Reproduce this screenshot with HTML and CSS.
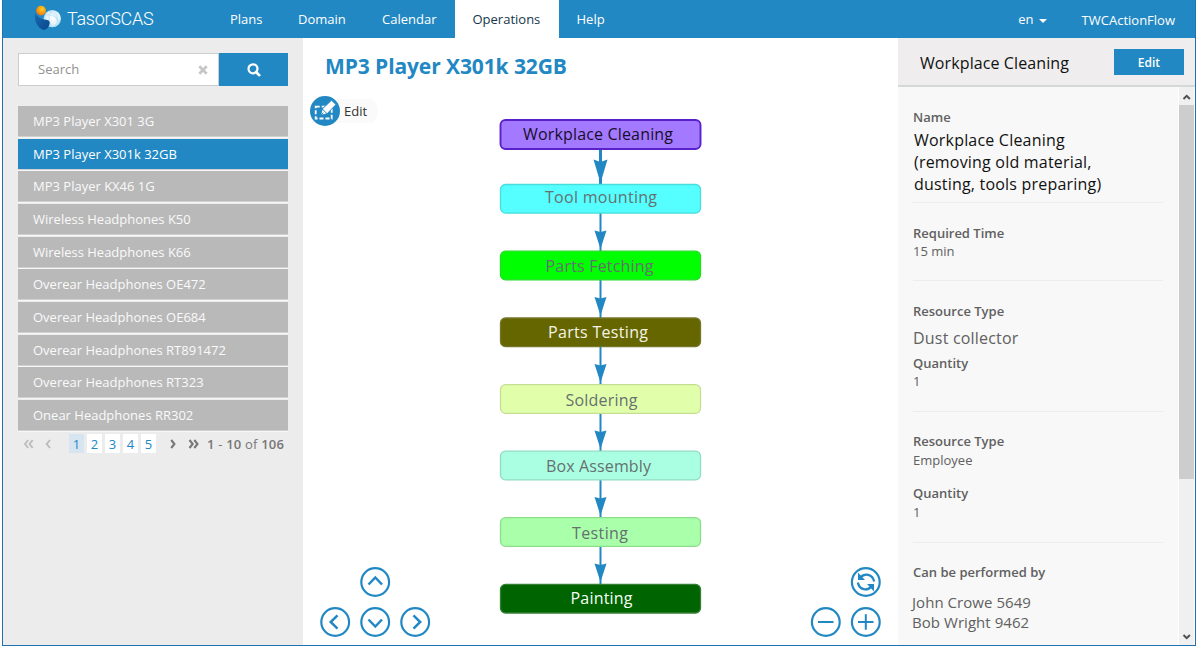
FILE: index.html
```html
<!DOCTYPE html>
<html lang="en">
<head>
<meta charset="utf-8">
<title>TasorSCAS - Operations</title>
<link rel="stylesheet" href="styles.css">
</head>
<body>
<div class="window">
  <header class="topbar">
    <div class="brand">
      <svg class="logo" width="28" height="28" viewBox="0 0 28 28">
        <defs>
          <radialGradient id="sun" cx="60%" cy="35%" r="65%"><stop offset="0" stop-color="#ffd21e"/><stop offset=".5" stop-color="#fba414"/><stop offset="1" stop-color="#ee7414"/></radialGradient>
          <radialGradient id="globe" cx="55%" cy="45%" r="60%"><stop offset="0" stop-color="#fff"/><stop offset=".6" stop-color="#e2f3fb"/><stop offset="1" stop-color="#a4daf4"/></radialGradient>
          <linearGradient id="body" x1="0" y1="0" x2="1" y2="1"><stop offset="0" stop-color="#1d69b0"/><stop offset="1" stop-color="#07478c"/></linearGradient>
        </defs>
        <circle cx="19.300" cy="14.600" r="8.700" fill="url(#globe)"/>
        <path d="M12 11Q20 9 27 18M15 7Q24 10 26 20M19 6Q28 12 22 23M20 6Q13 10 18 22" fill="none" stroke="#9bd3ee" stroke-width=".5"/>
        <path d="M2 9C4 12.500 8 15.500 13 15.800C16.500 16 17.500 18.500 16.300 21C15.500 23.500 13.500 25.500 11 26C5 24.500 1 18 2 9Z" fill="url(#body)"/>
        <circle cx="8" cy="6.600" r="4.900" fill="url(#sun)"/>
      </svg>
      <span class="brand-name">TasorSCAS</span>
    </div>
    <nav class="nav">
      <a class="nav-plans">Plans</a><a class="nav-domain">Domain</a><a class="nav-calendar">Calendar</a><a class="nav-operations active">Operations</a><a class="nav-help">Help</a>
    </nav>
    <div class="account">
      <span class="lang">en <i class="caret"></i></span>
      <span>TWCActionFlow</span>
    </div>
  </header>
  <div class="columns">
    <aside class="sidebar">
      <div class="search">
        <div class="search-field"><span>Search</span>
          <svg width="10" height="10" viewBox="0 0 10 10"><path d="M1.300 1.300L8.700 8.700M8.700 1.300L1.300 8.700" stroke="#c6c6c6" stroke-width="2.700"/></svg>
        </div>
        <div class="search-button"><svg width="14" height="14" viewBox="0 0 14 14"><circle cx="6" cy="5.800" r="4.500" fill="none" stroke="#fff" stroke-width="2.200"/><path d="M9 9L12.300 12.200" stroke="#fff" stroke-width="2.600" stroke-linecap="round"/></svg></div>
      </div>
      <ul class="products">
        <li>MP3 Player X301 3G</li>
        <li class="selected">MP3 Player X301k 32GB</li>
        <li>MP3 Player KX46 1G</li>
        <li>Wireless Headphones K50</li>
        <li>Wireless Headphones K66</li>
        <li>Overear Headphones OE472</li>
        <li>Overear Headphones OE684</li>
        <li>Overear Headphones RT891472</li>
        <li>Overear Headphones RT323</li>
        <li>Onear Headphones RR302</li>
      </ul>
      <div class="pager">
        <svg class="step-back" width="28" height="10" viewBox="0 0 28 10" fill="none" stroke="#bcbcbc" stroke-width="1.900"><path d="M5.200 1L2 5L5.200 9M9.700 1L6.500 5L9.700 9M27 1L23.700 5L27 9"/></svg>
        <div class="pages"><b class="current">1</b><b>2</b><b>3</b><b>4</b><b>5</b></div>
        <svg class="step-next" width="30" height="10" viewBox="0 0 30 10" fill="none" stroke="#777" stroke-width="2.100"><path d="M1.200 1L4.400 5L1.200 9M19.500 1L22.700 5L19.500 9M24.300 1L27.500 5L24.300 9"/></svg>
        <span class="range"><b>1</b> - <b>10</b> of <b>106</b></span>
      </div>
    </aside>
    <main class="canvas">
      <h1>MP3 Player X301k 32GB</h1>
      <div class="edit-tool">
        <svg width="30" height="30" viewBox="0 0 30 30"><circle cx="15" cy="15" r="15" fill="#2288c3"/><rect x="5.700" y="10.700" width="16" height="11.800" fill="none" stroke="#fff" stroke-width="1.800" stroke-dasharray="4 2"/><path d="M10.500 19.500L12.300 13L21.500 4.200L26 8.600L17 17.800Z" fill="#fff" stroke="#2288c3" stroke-width="1"/><path d="M12.300 13L17 17.700M10.500 19.500L13.300 16.700" stroke="#2288c3" stroke-width="1"/></svg>
        <span>Edit</span>
      </div>
      <svg class="flow" width="595" height="607" viewBox="303 38 595 607">
        <g stroke="#2288c3" stroke-width="2">
          <path d="M600.500 149V184" stroke-width="3"/>
          <path d="M600.500 213V251M600.500 280V318M600.500 347V384M600.500 413V451M600.500 480V517M600.500 546V584"/>
        </g>
        <g fill="#2288c3">
          <path d="M593.500 159.500L600.500 162L607.500 159.500L600.500 183Z"/>
          <path id="head" d="M594.500 230.500L600.500 232L606.500 230.500L600.500 249Z"/>
          <use href="#head" y="66.500"/><use href="#head" y="133.500"/><use href="#head" y="200"/><use href="#head" y="266.500"/><use href="#head" y="333"/>
        </g>
        <g stroke-width="1.300">
          <rect x="500.500" y="120" width="200" height="29" rx="5" fill="#a379ff" stroke="#5a21cb" stroke-width="1.900"/>
          <rect x="500.500" y="184.500" width="200" height="28.600" rx="5" fill="#55ffff" stroke="#48dcdc"/>
          <rect x="500.500" y="251.200" width="200" height="28.600" rx="5" fill="#00ff00" stroke="#24dc24"/>
          <rect x="500.500" y="318" width="200" height="28.600" rx="5" fill="#666600" stroke="#75752b"/>
          <rect x="500.500" y="384.700" width="200" height="28.600" rx="5" fill="#e1ffaa" stroke="#c5de94"/>
          <rect x="500.500" y="451.200" width="200" height="28.600" rx="5" fill="#aaffe2" stroke="#8eddc1"/>
          <rect x="500.500" y="517.700" width="200" height="28.600" rx="5" fill="#aaffaa" stroke="#8bdd8b"/>
          <rect x="500.500" y="584.400" width="200" height="28.600" rx="5" fill="#006400" stroke="#347f34"/>
        </g>
        <g class="labels">
          <text x="523" y="140" textLength="150" fill="#170d2b">Workplace Cleaning</text>
          <text x="545" y="203" textLength="112">Tool mounting</text>
          <text x="545.500" y="272" textLength="108">Parts Fetching</text>
          <text x="548" y="338" textLength="100" fill="#f4f4e6">Parts Testing</text>
          <text x="565.500" y="406" textLength="72">Soldering</text>
          <text x="546" y="471.500" textLength="105">Box Assembly</text>
          <text x="572" y="538.500" textLength="56">Testing</text>
          <text x="570.500" y="603.500" textLength="62" fill="#f5fff5">Painting</text>
        </g>
        <g fill="none" stroke="#2288c3" stroke-width="2.200">
          <circle cx="375.200" cy="582" r="13.900"/><circle cx="335.200" cy="622" r="13.900"/><circle cx="375.200" cy="622" r="13.900"/><circle cx="415.200" cy="622" r="13.900"/>
          <circle cx="865.800" cy="582" r="13.900"/><circle cx="825.800" cy="622" r="13.900"/><circle cx="865.800" cy="622" r="13.900"/>
          <path stroke-width="2.500" d="M368.500 584.500L375.300 577.500L382 584.500M337.500 615.300L330.700 622L337.500 628.700M368.500 619.500L375.300 626.500L382 619.500M413.500 615.300L420.200 622L413.500 628.700"/>
          <path stroke-width="2" d="M818 622H833.500M858 622H873.500M865.800 614.300V629.700"/>
          <path stroke-width="2.300" d="M860.500 577.500C864.500 572.800 872.500 573.700 874.200 581.500M871.300 586.500C867.500 591.200 859.500 590.300 857.800 582.500"/>
        </g>
        <g fill="#2288c3"><path d="M858 572.500V580H865Z"/><path d="M874 591.500V584H867Z"/></g>
      </svg>
    </main>
    <aside class="details">
      <div class="details-head"><h2>Workplace Cleaning</h2><span class="edit-button">Edit</span></div>
      <div class="details-body">
        <div class="fields">
          <section class="field-name"><h3>Name</h3><p class="large">Workplace Cleaning<br>(removing old material,<br>dusting, tools preparing)</p></section>
          <section class="field-time"><h3>Required Time</h3><p>15 min</p></section>
          <section class="field-device"><h3>Resource Type</h3><p class="device">Dust collector</p><h3>Quantity</h3><p>1</p></section>
          <section class="field-staff"><h3>Resource Type</h3><p>Employee</p><h3 class="spaced">Quantity</h3><p>1</p></section>
          <section class="field-people"><h3>Can be performed by</h3><p class="people">John Crowe 5649<br>Bob Wright 9462</p></section>
        </div>
        <div class="scrollbar">
          <svg width="15" height="18" viewBox="0 0 15 18"><path d="M4.500 12L7.700 8.800L10.900 12" fill="none" stroke="#505050" stroke-width="2"/></svg>
          <div class="thumb"></div>
          <svg class="down" width="15" height="18" viewBox="0 0 15 18"><path d="M4.500 8L7.700 11.200L10.900 8" fill="none" stroke="#505050" stroke-width="2"/></svg>
        </div>
      </div>
    </aside>
  </div>
</div>
</body>
</html>
```
FILE: styles.css
```css
* { box-sizing: border-box; }
body { margin: 0; background: #fff; font: 13px/18px "Open Sans", "Noto Sans", sans-serif; color: #606060; overflow: hidden; }
h1, h2, h3, p, ul { margin: 0; padding: 0; font-weight: 400; }
svg { display: block; flex: none; }
.window { margin-left: 2px; width: 1194px; height: 646px; border: solid #1f72ae; border-width: 0 1px 1px; display: flex; flex-direction: column; }

.topbar { height: 38px; flex: none; background: #2288c3; color: #fff; display: flex; }
.brand { width: 209px; padding-left: 30px; display: flex; }
.logo { margin-top: 4px; }
.brand-name { margin-left: 6px; font: 300 18px/37px Roboto, sans-serif; letter-spacing: -.3px; }
.nav { display: flex; line-height: 39px; }
.nav a { padding-left: 18px; white-space: nowrap; }
.nav-plans { width: 68px; }
.nav-domain { width: 84px; }
.nav-calendar { width: 90.500px; }
.nav-operations { width: 104px; }
.nav .active { background: #fff; color: #16364a; }
.account { margin-left: auto; display: flex; line-height: 40px; padding-right: 20px; gap: 35px; }
.lang { display: flex; align-items: center; gap: 5px; }
.caret { border: 4px solid transparent; border-top-color: #fff; border-bottom: 0; margin-top: 4px; }

.columns { flex: 1; min-height: 0; display: flex; }
.sidebar { width: 300px; background: #ececec; padding: 15px 15px 0; }
.search { display: flex; height: 33px; }
.search-field { flex: 1; background: #fff; border: 1px solid #ccc; padding: 0 10px 0 19px; display: flex; align-items: center; justify-content: space-between; color: #929292; }
.search-field span { margin-top: -2px; }
.search-button { width: 69px; background: #2288c3; display: flex; align-items: center; justify-content: center; }
.products { list-style: none; margin-top: 20px; display: grid; gap: 1.660px; }
.products li { height: 31px; line-height: 30px; padding-left: 15px; background: #b9b9b9; color: #fafafa; border-bottom: 1px solid #d0d0d0; box-shadow: 0 1px #f7f7f7; }
.products .selected { background: #2288c3; color: #fff; }
.pager { display: flex; align-items: center; height: 26px; padding-left: 5px; }
.pages { display: flex; gap: 3px; margin-left: 18px; }
.pages b { width: 15px; height: 19px; line-height: 20px; background: #fff; text-align: center; font-weight: 400; color: #2288c3; }
.pages .current { background: #d7e5f0; }
.step-next { margin-left: 14px; }
.range { margin-left: 7px; white-space: nowrap; color: #777; letter-spacing: .2px; }
.range b { font-weight: 600; }

.canvas { width: 595px; position: relative; }
.canvas h1 { font-size: 21px; line-height: 28px; font-weight: 700; color: #2288c3; padding: 14px 0 0 22px; white-space: nowrap; letter-spacing: -.1px; }
.edit-tool { display: flex; align-items: center; width: 68px; margin: 16px 0 0 7px; gap: 4px; color: #333; background: linear-gradient(#fafafa, #fafafa) center / 100% 24px no-repeat; border-radius: 15px; }
.flow { position: absolute; left: 0; top: 0; }
.labels { font-size: 16px; fill: #667070; }

.details { flex: 1; min-width: 0; background: #f8f8f8; display: flex; flex-direction: column; }
.details-head { height: 49px; flex: none; border-bottom: 2px solid #d5d8d8; background: #efeded; display: flex; justify-content: space-between; padding: 11px 11px 0 22px; }
.details-head h2 { font-size: 16px; line-height: 28px; color: #111; letter-spacing: .1px; }
.edit-button { width: 70px; height: 26px; line-height: 27px; text-align: center; background: #2288c3; color: #fff; font-size: 12px; font-weight: 600; }
.details-body { flex: 1; min-height: 0; display: flex; }
.fields { flex: 1; padding: 0 15px; }
.fields section + section { border-top: 1px solid #ededed; }
.fields h3 { font-size: 13px; font-weight: 600; }
.field-name { height: 115px; padding-top: 21px; }
.field-name .large { font-size: 16px; line-height: 22px; color: #111; padding: 3px 0 0 1px; white-space: nowrap; letter-spacing: .2px; }
.field-time { height: 78px; padding-top: 21px; }
.field-device { height: 131px; padding-top: 21px; }
.fields .device { font-size: 16px; line-height: 34px; letter-spacing: .2px; padding-top: 1px; margin-bottom: -1px; }
.field-staff { height: 131px; padding-top: 20px; }
.field-staff p { padding-top: 1px; }
.fields .spaced { margin-top: 15px; }
.field-people { padding-top: 20px; }
.fields .people { font-size: 15px; line-height: 20px; margin: 11px 0 0 -1px; letter-spacing: .05px; }
.scrollbar { width: 17px; background: #f0f0f0; border: solid #fff; border-width: 0 1px; display: flex; flex-direction: column; }
.thumb { height: 374px; background: #cdcdcd; }
.scrollbar .down { margin-top: auto; }
```
